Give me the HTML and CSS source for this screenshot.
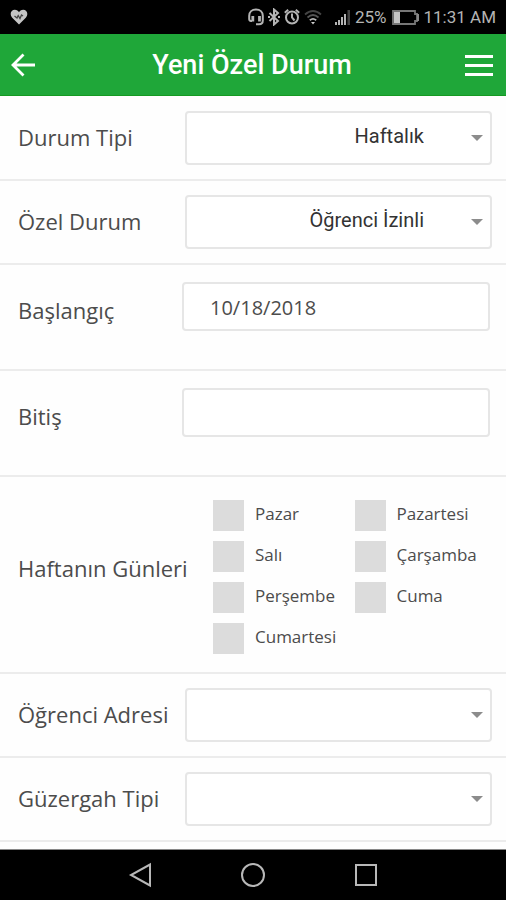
FILE: index.html
```html
<!DOCTYPE html>
<html lang="tr">
<head>
<meta charset="utf-8">
<meta name="viewport" content="width=device-width, initial-scale=1">
<title>Yeni Özel Durum</title>
<link rel="stylesheet" href="styles.css">
</head>
<body>
<div class="status">
  <svg class="heart" width="18" height="16" viewBox="0 0 18 16" aria-hidden="true"><path d="M9 15.400L2 8.500C-.8 5 1.200.8 4.800.8 6.800.8 8.200 1.800 9 3.200 9.800 1.800 11.200.8 13.200.8c3.600 0 5.600 4.200 2.800 7.700z" fill="#c4c4c4"/><path d="M4.500 7l2.500 2 1.200-2.500 1.800 3 1.500-3.500 1.500 1" fill="none" stroke="#444" stroke-width="1.300"/></svg>
  <div class="indicators">
    <svg width="16" height="18" viewBox="0 0 16 18" fill="none" stroke="#b4b4b4" stroke-width="2" aria-hidden="true"><path d="M4 13H3a2 2 0 0 1-1.800-2V7.800C1.200 4 4 1.500 8 1.500s6.800 2.500 6.800 6.300v4.700c0 2-1.400 3.800-3.800 3.800H8"/><path d="M4.800 8v5.500M11.500 8v5.500" stroke-width="2.800"/></svg>
    <svg width="12" height="18" viewBox="0 0 12 18" fill="none" stroke="#b4b4b4" stroke-width="2" aria-hidden="true"><path d="M1.500 5l8.500 8-4 3.500V1.500L10 5l-8.500 8"/><path d="M0 9h2M10 9h2" stroke-width="2"/></svg>
    <svg width="16" height="18" viewBox="0 0 16 18" fill="none" stroke="#b4b4b4" stroke-width="2" aria-hidden="true"><circle cx="8" cy="9.500" r="6"/><path d="M8 5.500v4l2.500 3M.8 4.800l3.400-3M15.200 4.800l-3.400-3"/></svg>
    <svg class="wifi" width="18" height="18" viewBox="0 0 18 18" fill="none" stroke-width="1.800" aria-hidden="true"><path d="M1 6.500Q9-.5 17 6.500" stroke="#444"/><path d="M3.500 9.500Q9 4.500 14.500 9.500" stroke="#555"/><path d="M5.800 12.200Q9 9.500 12.200 12.200" stroke="#b4b4b4"/><path d="M7 14h4l-2 2.500z" fill="#ccc"/></svg>
    <svg width="17" height="18" viewBox="0 0 17 18" fill="#b4b4b4" aria-hidden="true"><path d="M1 14h2v3H1zM4 12h2v5H4zM7 9h2v8H7zM10 6h2v11h-2z"/><path d="M13.500 2h2.500v15h-2.500z" fill="#444"/></svg>
    <span class="percent">25%</span>
    <svg class="battery" width="29" height="17" viewBox="0 0 29 17" aria-hidden="true"><path d="M2 2h22v3h2v7h-2v3H2z" fill="none" stroke="#777" stroke-width="1.800"/><path d="M3 3h6v11H3z" fill="#c4c4c4"/><path d="M26 5h2v7h-2z" fill="#888"/></svg>
    <span class="clock">11:31 AM</span>
  </div>
</div>

<header class="topbar">
  <button type="button" class="icon-button" aria-label="Geri"><svg width="24" height="24" viewBox="0 0 24 24" fill="none" stroke="#fff" stroke-width="2.800"><path d="M24 12H2M12.500 1.500L2 12l10.500 10.500"/></svg></button>
  <h1>Yeni Özel Durum</h1>
  <button type="button" class="icon-button" aria-label="Menü"><svg width="28" height="24" viewBox="0 0 28 24" fill="#fff"><path d="M0 2h28v3H0zM0 11h28v3H0zM0 20h28v3H0z"/></svg></button>
</header>

<main>
  <form>
    <div class="row">
      <label for="tip">Durum Tipi</label>
      <div class="select"><select id="tip"><option>Haftalık</option></select><svg width="14" height="8" viewBox="0 0 14 8" aria-hidden="true"><path d="M1 1h12L7 7z"/></svg></div>
    </div>
    <div class="row">
      <label for="ozel">Özel Durum</label>
      <div class="select"><select id="ozel"><option>Öğrenci İzinli</option></select><svg width="14" height="8" viewBox="0 0 14 8" aria-hidden="true"><path d="M1 1h12L7 7z"/></svg></div>
    </div>
    <div class="row date">
      <label for="bas">Başlangıç</label>
      <input type="text" id="bas" value="10/18/2018">
    </div>
    <div class="row date">
      <label for="bit">Bitiş</label>
      <input type="text" id="bit">
    </div>
    <div class="row days" role="group" aria-labelledby="gunler">
      <span id="gunler" class="group-label">Haftanın Günleri</span>
      <div class="day-grid">
        <label><input type="checkbox"><span>Pazar</span></label>
        <label><input type="checkbox"><span>Pazartesi</span></label>
        <label><input type="checkbox"><span>Salı</span></label>
        <label><input type="checkbox"><span>Çarşamba</span></label>
        <label><input type="checkbox"><span>Perşembe</span></label>
        <label><input type="checkbox"><span>Cuma</span></label>
        <label><input type="checkbox"><span>Cumartesi</span></label>
      </div>
    </div>
    <div class="row">
      <label for="adres">Öğrenci Adresi</label>
      <div class="select"><select id="adres"><option></option></select><svg width="14" height="8" viewBox="0 0 14 8" aria-hidden="true"><path d="M1 1h12L7 7z"/></svg></div>
    </div>
    <div class="row">
      <label for="guzergah">Güzergah Tipi</label>
      <div class="select"><select id="guzergah"><option></option></select><svg width="14" height="8" viewBox="0 0 14 8" aria-hidden="true"><path d="M1 1h12L7 7z"/></svg></div>
    </div>
  </form>
</main>

<nav class="system">
  <button type="button" aria-label="Geri"><svg width="26" height="26" viewBox="0 0 26 26"><path d="M23 2.500v21L4 13z"/></svg></button>
  <button type="button" aria-label="Ana ekran"><svg width="26" height="26" viewBox="0 0 26 26"><circle cx="13" cy="13" r="11"/></svg></button>
  <button type="button" aria-label="Son uygulamalar"><svg width="26" height="26" viewBox="0 0 26 26"><path d="M3 3h20v20H3z"/></svg></button>
</nav>
</body>
</html>
```

FILE: styles.css
```css
* { box-sizing: border-box; }

body {
  margin: 0;
  min-height: 100vh;
  display: flex;
  flex-direction: column;
  background: #fefefe;
  color: #4c4c4c;
  font-family: "Open Sans", sans-serif;
}

button {
  padding: 0;
  border: 0;
  background: none;
}

svg { display: block; }

.status {
  display: flex;
  align-items: center;
  justify-content: space-between;
  height: 34px;
  padding: 0 10px;
  background: #000;
  color: #b4b4b4;
  font: 17px/34px Roboto, sans-serif;
}

.indicators {
  display: flex;
  align-items: center;
  gap: 4px;
}

.wifi { margin-right: 8px; }

.topbar {
  display: flex;
  align-items: center;
  justify-content: space-between;
  height: 62px;
  padding: 0 13px 0 11px;
  background: #1fa739;
  border-bottom: 1px solid #159a22;
}

.icon-button { width: 28px; }

.topbar h1 {
  margin: 0;
  color: #fff;
  font: 500 27px/32px Roboto, sans-serif;
}

main {
  flex: 1;
  padding-top: 1px;
}

form { margin: 0; }

.row {
  display: grid;
  grid-template-columns: 167px 1fr;
  align-items: center;
  padding: 14px 14px 14px 18px;
  border-bottom: 2px solid #ececec;
}

.row > label,
.group-label {
  padding-bottom: 2px;
  font-size: 22px;
  line-height: 32px;
  white-space: nowrap;
}

.select { position: relative; }

.select svg {
  position: absolute;
  right: 8px;
  top: 23px;
  fill: #8c8c8c;
  pointer-events: none;
}

select,
input[type="text"] {
  display: block;
  width: 100%;
  border: 2px solid #e6e6e6;
  border-radius: 4px;
  background: #fff;
  color: #333;
}

select {
  appearance: none;
  height: 54px;
  padding: 0 66px 4px 12px;
  font: 20px/24px Roboto, sans-serif;
  text-align-last: right;
}

.date {
  grid-template-columns: 164px 1fr;
  padding: 17px 16px 38px 18px;
}

.row.date > label {
  padding-top: 6px;
  padding-bottom: 0;
}

input[type="text"] {
  height: 49px;
  padding: 2px 26px 0;
  color: #4c4c4c;
  font: 20px/24px "Open Sans", sans-serif;
}

.days {
  grid-template-columns: 195px 1fr;
  padding-top: 23px;
  padding-bottom: 18px;
}

.row > .group-label { padding-bottom: 18px; }

.day-grid {
  display: grid;
  grid-template-columns: 1fr 1fr;
  gap: 10px 4px;
}

.day-grid label {
  display: flex;
  align-items: center;
  gap: 11px;
  font-size: 17px;
  line-height: 24px;
}

.day-grid span { padding-bottom: 3px; }

input[type="checkbox"] {
  appearance: none;
  flex: none;
  width: 31px;
  height: 31px;
  margin: 0;
  background: #dcdcdc;
}

input[type="checkbox"]:checked { background: #1fa739; }

.system {
  display: flex;
  align-items: center;
  justify-content: center;
  gap: 87px;
  height: 51px;
  border-top: 1px solid #888;
  background: #000;
}

.system svg {
  fill: none;
  stroke: #b8b8b8;
  stroke-width: 2;
}
```
